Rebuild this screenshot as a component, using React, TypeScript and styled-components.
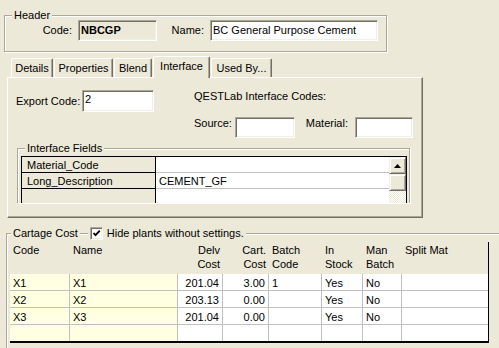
import styled, { createGlobalStyle } from 'styled-components'

const GlobalStyle = createGlobalStyle`
  html, body {
    margin: 0;
    padding: 0;
    background: #ece9d8;
  }
  body {
    font-family: "Liberation Sans", Arial, sans-serif;
    font-size: 11px;
    color: #000;
  }
`

const Window = styled.div`
  width: 499px;
  height: 348px;
  overflow: hidden;
  display: flex;
  flex-direction: column;
  align-items: flex-start;
  background: #ece9d8;

  & > * {
    flex-shrink: 0;
  }
`

const GroupBox = styled.div<{ $width: number; $height: number; $open?: boolean }>`
  position: relative;
  box-sizing: border-box;
  flex-shrink: 0;
  width: ${(p) => p.$width}px;
  height: ${(p) => p.$height}px;
  border: 1px solid #aca899;
  border-bottom-width: ${(p) => (p.$open ? 0 : 1)}px;
  box-shadow: inset 1px 1px 0 #fff, 1px 1px 0 #fff;
`

const Legend = styled.div<{ $left: number }>`
  position: absolute;
  top: -8px;
  left: ${(p) => p.$left}px;
  display: flex;
  align-items: center;
  gap: 8px;
  line-height: 14px;
  white-space: nowrap;
`

const LegendPart = styled.span`
  display: flex;
  align-items: center;
  gap: 4px;
  background: #ece9d8;
  padding: 0 2px;
`

const HeaderGroup = styled(GroupBox)`
  margin: 15px 0 0 4px;
`

const FieldRow = styled.div<{ $align?: string }>`
  display: flex;
  align-items: ${(p) => p.$align ?? 'center'};
`

const HeaderRow = styled(FieldRow)`
  padding-top: 4px;
`

const FieldLabel = styled.span<{ $width?: number; $gap?: number }>`
  flex-shrink: 0;
  width: ${(p) => (p.$width ? `${p.$width}px` : 'auto')};
  margin-right: ${(p) => p.$gap ?? 6}px;
  text-align: right;
  line-height: 13px;
  white-space: nowrap;
`

const TextBox = styled.div<{
  $width: number
  $height?: number
  $disabled?: boolean
  $bold?: boolean
  $top?: boolean
}>`
  box-sizing: border-box;
  flex-shrink: 0;
  width: ${(p) => p.$width}px;
  height: ${(p) => p.$height ?? 21}px;
  display: flex;
  align-items: ${(p) => (p.$top ? 'flex-start' : 'center')};
  padding: ${(p) => (p.$top ? '2px 2px 0' : '0 2px')};
  background: ${(p) => (p.$disabled ? '#ece9d8' : '#fff')};
  font-weight: ${(p) => (p.$bold ? 700 : 400)};
  line-height: 13px;
  white-space: nowrap;
  overflow: hidden;
  border: 1px solid;
  border-color: #aca899 #fff #fff #aca899;
  box-shadow: inset 1px 1px 0 #716f64, inset -1px -1px 0 #f1efe2;
`

const TabStrip = styled.div`
  position: relative;
  z-index: 1;
  display: flex;
  align-items: flex-end;
  gap: 1px;
  height: 21px;
  margin: 4px 0 0 11px;
`

const Tab = styled.div<{ $width: number; $active?: boolean }>`
  box-sizing: border-box;
  width: ${(p) => p.$width}px;
  height: ${(p) => (p.$active ? 22 : 19)}px;
  margin-bottom: ${(p) => (p.$active ? -1 : 0)}px;
  padding-bottom: ${(p) => (p.$active ? 3 : 1)}px;
  display: flex;
  align-items: center;
  justify-content: center;
  background: #ece9d8;
  border-top: 1px solid #fff;
  border-left: 1px solid #fff;
  border-right: 1px solid #716f64;
  border-radius: 2px 2px 0 0;
  box-shadow: inset -1px 0 0 #aca899;
  white-space: nowrap;
`

const TabPanel = styled.div`
  box-sizing: border-box;
  width: 416px;
  height: 141px;
  margin-left: 7px;
  padding: 12px 0 0 8px;
  display: flex;
  flex-direction: column;
  align-items: flex-start;
  border: 1px solid;
  border-color: #fff #716f64 #716f64 #fff;
  box-shadow: inset -1px -1px 0 #aca899;
`

const CodesRow = styled.div`
  display: flex;
  align-items: flex-start;
`

const ExportColumn = styled.div`
  width: 178px;
`

const CodesColumn = styled.div`
  display: flex;
  flex-direction: column;
  gap: 14px;
`

const Caption = styled.div`
  line-height: 13px;
`

const InterfaceGroup = styled(GroupBox)`
  margin: 10px 0 0 1px;
  padding: 7px 0 0 3px;
`

const GridClip = styled.div`
  width: 386px;
  height: 47px;
  overflow: hidden;
`

const FieldGrid = styled.div`
  box-sizing: border-box;
  display: flex;
  width: 386px;
  height: 64px;
  border: 1px solid #000;
  border-bottom: none;
  background: #fff;
`

const FieldRows = styled.div`
  display: flex;
  flex-direction: column;
  width: 367px;
`

const GridRow = styled.div`
  display: flex;
  height: 16px;
`

const KeyCell = styled.div`
  box-sizing: border-box;
  width: 134px;
  padding-left: 5px;
  background: #ece9d8;
  border-right: 1px solid #000;
  border-bottom: 1px solid #000;
  line-height: 16px;
`

const ValueCell = styled.div`
  box-sizing: border-box;
  flex: 1;
  padding-left: 3px;
  border-bottom: 1px solid #c0c0c0;
  line-height: 16px;
`

const ScrollBar = styled.div`
  width: 17px;
  display: flex;
  flex-direction: column;
`

const ScrollButton = styled.div`
  box-sizing: border-box;
  width: 17px;
  height: 17px;
  display: flex;
  align-items: center;
  justify-content: center;
  background: #ece9d8;
  border: 1px solid;
  border-color: #f1efe2 #716f64 #716f64 #f1efe2;
  box-shadow: inset 1px 1px 0 #fff, inset -1px -1px 0 #aca899;
`

const ScrollTrack = styled.div`
  flex: 1;
  background: repeating-conic-gradient(#fff 0 25%, #ece9d8 0 50%) 0 0 / 2px 2px;
`

const CartageGroup = styled(GroupBox)`
  margin: 15px 0 0 6px;
  padding: 8px 0 0 3px;
`

const CheckBox = styled.span`
  box-sizing: border-box;
  width: 13px;
  height: 13px;
  display: flex;
  align-items: center;
  justify-content: center;
  background: #fff;
  border: 1px solid;
  border-color: #aca899 #fff #fff #aca899;
  box-shadow: inset 1px 1px 0 #716f64, inset -1px -1px 0 #f1efe2;
`

const CostTable = styled.div`
  box-sizing: border-box;
  display: grid;
  grid-template-columns: 60px 108px 45px 46px 53px 41px 39px 86px;
  width: 479px;
  border-right: 1px solid #000;
  border-bottom: 2px solid #000;
`

const HeadCell = styled.div<{ $right?: boolean }>`
  height: 31px;
  padding: 1px 3px 0 ${(p) => (p.$right ? 0 : 3)}px;
  text-align: ${(p) => (p.$right ? 'right' : 'left')};
  line-height: 14px;
`

const DataCell = styled.div<{ $right?: boolean; $fixed?: boolean; $last?: boolean; $lastCol?: boolean }>`
  box-sizing: border-box;
  height: ${(p) => (p.$last ? 16 : 17)}px;
  padding: 2px 3px 0;
  text-align: ${(p) => (p.$right ? 'right' : 'left')};
  line-height: 14px;
  white-space: nowrap;
  background: ${(p) => (p.$fixed ? '#ffffe1' : '#fff')};
  border-right: ${(p) => (p.$lastCol ? 'none' : '1px solid #c0c0c0')};
  border-bottom: ${(p) => (p.$last ? 'none' : '1px solid #c0c0c0')};
`

type Column = { key: string; title: [string, string]; right?: boolean; fixed?: boolean }

const columns: Column[] = [
  { key: 'code', title: ['Code', ''], fixed: true },
  { key: 'name', title: ['Name', ''], fixed: true },
  { key: 'delv', title: ['Delv', 'Cost'], right: true },
  { key: 'cart', title: ['Cart.', 'Cost'], right: true },
  { key: 'batch', title: ['Batch', 'Code'] },
  { key: 'stock', title: ['In', 'Stock'] },
  { key: 'man', title: ['Man', 'Batch'] },
  { key: 'split', title: ['Split Mat', ''] },
]

const rows: Record<string, string>[] = [
  { code: 'X1', name: 'X1', delv: '201.04', cart: '3.00', batch: '1', stock: 'Yes', man: 'No', split: '' },
  { code: 'X2', name: 'X2', delv: '203.13', cart: '0.00', batch: '', stock: 'Yes', man: 'No', split: '' },
  { code: 'X3', name: 'X3', delv: '201.04', cart: '0.00', batch: '', stock: 'Yes', man: 'No', split: '' },
  { code: '', name: '', delv: '', cart: '', batch: '', stock: '', man: '', split: '' },
]

const tabs = [
  { label: 'Details', width: 42 },
  { label: 'Properties', width: 59 },
  { label: 'Blend', width: 38 },
  { label: 'Interface', width: 57, active: true },
  { label: 'Used By...', width: 61 },
]

const interfaceFields = [
  ['Material_Code', ''],
  ['Long_Description', 'CEMENT_GF'],
  ['', ''],
]

export default function App() {
  return (
    <Window>
      <GlobalStyle />
      <HeaderGroup $width={383} $height={37}>
        <Legend $left={7}>
          <LegendPart>Header</LegendPart>
        </Legend>
        <HeaderRow>
          <FieldLabel $width={67}>Code:</FieldLabel>
          <TextBox $width={79} $disabled $bold>
            NBCGP
          </TextBox>
          <FieldLabel $width={47}>Name:</FieldLabel>
          <TextBox $width={168}>BC General Purpose Cement</TextBox>
        </HeaderRow>
      </HeaderGroup>

      <TabStrip>
        {tabs.map((t) => (
          <Tab key={t.label} $width={t.width} $active={t.active}>
            {t.label}
          </Tab>
        ))}
      </TabStrip>
      <TabPanel>
        <CodesRow>
          <ExportColumn>
            <FieldRow>
              <FieldLabel $width={62} $gap={4}>
                Export Code:
              </FieldLabel>
              <TextBox $width={72} $height={22} $top>
                2
              </TextBox>
            </FieldRow>
          </ExportColumn>
          <CodesColumn>
            <Caption>QESTLab Interface Codes:</Caption>
            <FieldRow $align="flex-start">
              <FieldLabel $width={37} $gap={4}>
                Source:
              </FieldLabel>
              <TextBox $width={60} />
              <FieldLabel $width={53} $gap={7}>
                Material:
              </FieldLabel>
              <TextBox $width={58} />
            </FieldRow>
          </CodesColumn>
        </CodesRow>

        <InterfaceGroup $width={393} $height={55} $open>
          <Legend $left={7}>
            <LegendPart>Interface Fields</LegendPart>
          </Legend>
          <GridClip>
            <FieldGrid>
              <FieldRows>
                {interfaceFields.map(([k, v], i) => (
                  <GridRow key={i}>
                    <KeyCell>{k}</KeyCell>
                    <ValueCell>{v}</ValueCell>
                  </GridRow>
                ))}
              </FieldRows>
              <ScrollBar>
                <ScrollButton>
                  <svg width="7" height="4" viewBox="0 0 7 4">
                    <polygon points="3.5,0 7,4 0,4" fill="#000" />
                  </svg>
                </ScrollButton>
                <ScrollButton />
                <ScrollTrack />
              </ScrollBar>
            </FieldGrid>
          </GridClip>
        </InterfaceGroup>
      </TabPanel>

      <CartageGroup $width={500} $height={120} $open>
        <Legend $left={4}>
          <LegendPart>Cartage Cost</LegendPart>
          <LegendPart>
            <CheckBox>
              <svg width="9" height="9" viewBox="0 0 9 9">
                <path d="M1.5 4 L3.5 6.2 L7.8 1.6" stroke="#000" strokeWidth="1.8" fill="none" />
              </svg>
            </CheckBox>
            Hide plants without settings.
          </LegendPart>
        </Legend>
        <CostTable>
          {columns.map((c) => (
            <HeadCell key={c.key} $right={c.right}>
              {c.title[0]}
              <br />
              {c.title[1]}
            </HeadCell>
          ))}
          {rows.map((r, ri) =>
            columns.map((c, ci) => (
              <DataCell
                key={`${ri}-${c.key}`}
                $right={c.right}
                $fixed={c.fixed}
                $last={ri === rows.length - 1}
                $lastCol={ci === columns.length - 1}
              >
                {r[c.key]}
              </DataCell>
            )),
          )}
        </CostTable>
      </CartageGroup>
    </Window>
  )
}
